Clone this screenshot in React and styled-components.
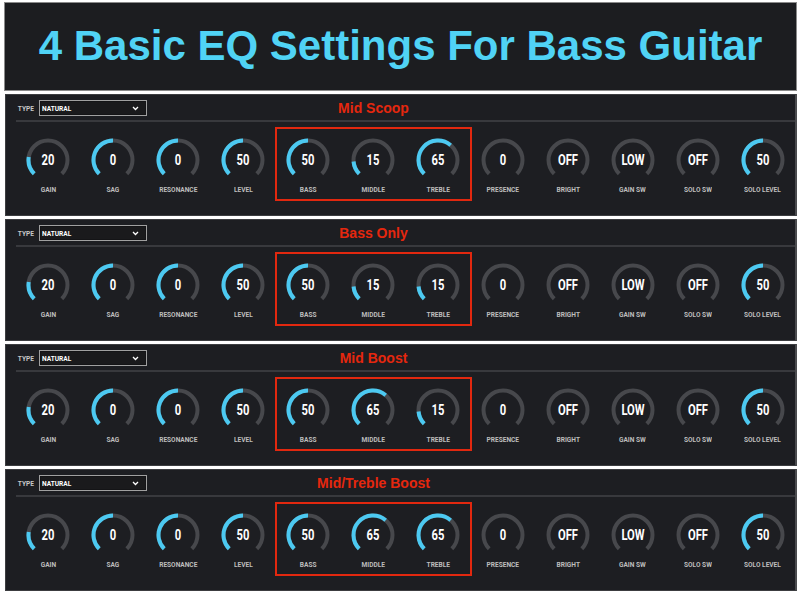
import React from 'react';
import styled, { createGlobalStyle } from 'styled-components';

const GlobalStyle = createGlobalStyle`
  body {
    margin: 0;
    background: #ffffff;
    font-family: "Liberation Sans", Arial, sans-serif;
  }
`;

const Page = styled.div`
  width: 803px;
  height: 594px;
  box-sizing: border-box;
  padding: 2px 6px 0 4px;
  display: flex;
  flex-direction: column;
  gap: 3px;
`;

const TitleBox = styled.div`
  height: 89px;
  box-sizing: border-box;
  background: #1c1d20;
  border: 1px solid #8a8a8a;
  display: flex;
  align-items: center;
  justify-content: center;
`;

const Title = styled.h1`
  margin: 0;
  font-family: "Liberation Sans", Arial, sans-serif;
  font-weight: bold;
  font-size: 42px;
  color: #50d3f5;
  padding-bottom: 2px;
`;

const Panel = styled.section`
  height: 122px;
  box-sizing: border-box;
  margin-left: 1px;
  background: #1d1e22;
  border: 1px solid #3c3d40;
  border-right: 2px solid #4a4b4e;
  padding: 0 0 0 10px;
`;

const Header = styled.div`
  display: grid;
  grid-template-columns: repeat(12, 65px);
  align-items: center;
  height: 27px;
  border-bottom: 2px solid #38393d;
  box-sizing: border-box;
  padding-top: 1px;
`;

const TypeField = styled.div`
  grid-column: 1 / 4;
  display: flex;
  align-items: center;
  gap: 3px;
`;

const SmallLabel = styled.span`
  display: inline-block;
  font-family: Roboto, "Liberation Sans", sans-serif;
  font-weight: bold;
  font-size: 8px;
  color: #c8c8c8;
  transform: scaleX(0.82);
  transform-origin: center;
  white-space: nowrap;
`;

const Select = styled.div`
  width: 108px;
  height: 16px;
  box-sizing: border-box;
  border: 1px solid #a0a0a0;
  box-shadow: inset 0 0 0 1px #141416;
  background: #1a1a1c;
  display: flex;
  align-items: center;
  justify-content: space-between;
  padding: 0 7px 0 2px;
`;

const SelectText = styled(SmallLabel)`
  color: #ffffff;
  transform-origin: left center;
`;

const Chevron = styled.svg`
  width: 7px;
  height: 5px;
`;

const PresetName = styled.div`
  grid-column: 5 / 8;
  text-align: center;
  font-family: "Liberation Sans", Arial, sans-serif;
  font-weight: bold;
  font-size: 14px;
  color: #e5270e;
`;

const KnobRow = styled.div`
  display: flex;
  margin-top: 6px;
`;

const EqGroup = styled.div`
  display: flex;
  outline: 2px solid #e2280f;
  outline-offset: -1px;
`;

const KnobCell = styled.div`
  width: 65px;
  height: 72px;
  display: flex;
  flex-direction: column;
  align-items: center;
  padding-top: 10px;
  box-sizing: border-box;
`;

const Dial = styled.div`
  position: relative;
  width: 44px;
  height: 44px;
`;

const DialValue = styled.span`
  position: absolute;
  inset: 0;
  display: flex;
  align-items: center;
  justify-content: center;
  font-family: Roboto, "Liberation Sans", sans-serif;
  font-weight: bold;
  font-size: 14px;
  color: #ffffff;
  transform: scaleX(0.8);
`;

const KnobLabel = styled(SmallLabel)`
  margin-top: 3px;
  color: #bdbdbd;
`;

const point = (deg, r) => {
  const a = (deg * Math.PI) / 180;
  return [22 + r * Math.sin(a), 22 - r * Math.cos(a)];
};

const arc = (from, to, r) => {
  const [x1, y1] = point(from, r);
  const [x2, y2] = point(to, r);
  const large = to - from > 180 ? 1 : 0;
  return `M ${x1} ${y1} A ${r} ${r} 0 ${large} 1 ${x2} ${y2}`;
};

const Knob = ({ label, value, fill }) => {
  const start = -135;
  const end = start + 270 * fill;
  return (
    <KnobCell>
      <Dial>
        <svg width="44" height="44" viewBox="0 0 44 44">
          <path d={arc(-135, 135, 19.5)} stroke="#47484c" strokeWidth="4" fill="none" />
          {fill > 0 && (
            <path d={arc(start, end, 19.5)} stroke="#4cc9f1" strokeWidth="4" fill="none" />
          )}
        </svg>
        <DialValue>{value}</DialValue>
      </Dial>
      <KnobLabel>{label}</KnobLabel>
    </KnobCell>
  );
};

const leftKnobs = [
  { label: 'GAIN', value: '20', fill: 0.2 },
  { label: 'SAG', value: '0', fill: 0.5 },
  { label: 'RESONANCE', value: '0', fill: 0.5 },
  { label: 'LEVEL', value: '50', fill: 0.5 },
];

const rightKnobs = [
  { label: 'PRESENCE', value: '0', fill: 0 },
  { label: 'BRIGHT', value: 'OFF', fill: 0 },
  { label: 'GAIN SW', value: 'LOW', fill: 0 },
  { label: 'SOLO SW', value: 'OFF', fill: 0 },
  { label: 'SOLO LEVEL', value: '50', fill: 0.5 },
];

const presets = [
  { name: 'Mid Scoop', eq: [50, 15, 65] },
  { name: 'Bass Only', eq: [50, 15, 15] },
  { name: 'Mid Boost', eq: [50, 65, 15] },
  { name: 'Mid/Treble Boost', eq: [50, 65, 65] },
];

const eqLabels = ['BASS', 'MIDDLE', 'TREBLE'];

const AmpPanel = ({ preset }) => (
  <Panel>
    <Header>
      <TypeField>
        <SmallLabel>TYPE</SmallLabel>
        <Select>
          <SelectText>NATURAL</SelectText>
          <Chevron viewBox="0 0 7 5">
            <path d="M1 1 L3.5 3.5 L6 1" stroke="#ffffff" strokeWidth="1.3" fill="none" />
          </Chevron>
        </Select>
      </TypeField>
      <PresetName>{preset.name}</PresetName>
    </Header>
    <KnobRow>
      {leftKnobs.map((k) => (
        <Knob key={k.label} {...k} />
      ))}
      <EqGroup>
        {preset.eq.map((v, i) => (
          <Knob key={eqLabels[i]} label={eqLabels[i]} value={String(v)} fill={v / 100} />
        ))}
      </EqGroup>
      {rightKnobs.map((k) => (
        <Knob key={k.label} {...k} />
      ))}
    </KnobRow>
  </Panel>
);

const App = () => (
  <>
    <GlobalStyle />
    <Page>
      <TitleBox>
        <Title>4 Basic EQ Settings For Bass Guitar</Title>
      </TitleBox>
      {presets.map((p) => (
        <AmpPanel key={p.name} preset={p} />
      ))}
    </Page>
  </>
);

export default App;
